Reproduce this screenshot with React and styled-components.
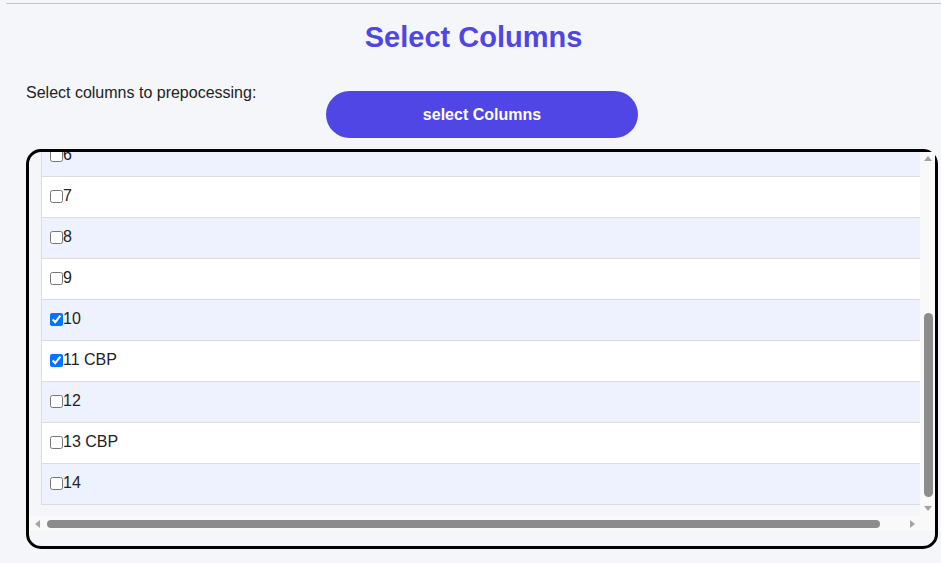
import React, { useState, useRef, useLayoutEffect } from 'react';
import styled, { createGlobalStyle } from 'styled-components';

const GlobalStyle = createGlobalStyle`
    html, body {
        margin: 0;
        padding: 0;
        background: #f5f6fa;
        font-family: "Liberation Sans", Arial, sans-serif;
        color: #222;
    }
`;

const Page = styled.div`
    padding-top: 3px;
    height: 563px;
    box-sizing: border-box;
    overflow: hidden;
`;

const Divider = styled.div`
    margin-left: 6px;
    border-top: 1px solid #c4c5cc;
`;

const Title = styled.h2`
    margin: 17px 0 0 6px;
    font-size: 29px;
    line-height: 32px;
    font-weight: bold;
    text-align: center;
    color: #4f46e5;
`;

const Content = styled.div`
    padding: 0 3px 0 26px;
`;

const ActionRow = styled.div`
    display: grid;
    grid-template-columns: 1fr 312px 1fr;
    align-items: start;
    margin-top: 31px;
`;

const Label = styled.span`
    font-size: 16px;
    line-height: 18px;
    color: #222;
`;

const SelectButton = styled.button`
    margin-top: 7px;
    height: 47px;
    border: none;
    border-radius: 24px;
    background: #4f46e5;
    color: #fff;
    font-family: "Liberation Sans", Arial, sans-serif;
    font-size: 16px;
    font-weight: bold;
    cursor: pointer;
`;

const Box = styled.div`
    margin-top: 11px;
    height: 400px;
    box-sizing: border-box;
    border: 3px solid #000;
    border-radius: 15px;
    padding-bottom: 15px;
`;

const ScrollFrame = styled.div`
    display: grid;
    grid-template-columns: 1fr 15px;
    grid-template-rows: 364px 15px;
`;

const Viewport = styled.div`
    overflow: hidden;
    box-sizing: border-box;
    padding: 12px 0 11px 12px;
`;

/* scrollbars are drawn by hand: the headless browser hides the native ones */
const VTrack = styled.div`
    background: #f9f9f9;
    display: flex;
    flex-direction: column;
    align-items: center;
`;

const HTrack = styled.div`
    background: #f9f9f9;
    display: flex;
    align-items: center;
`;

const Corner = styled.div`
    background: #f9f9f9;
`;

const ArrowCell = styled.div`
    width: 15px;
    height: 15px;
    flex: none;
    display: flex;
    align-items: center;
    justify-content: center;
`;

const Arrow = styled.span`
    width: 0;
    height: 0;
    border: 4px solid transparent;
    ${(p) => p.$dir === 'up' && 'border-bottom: 5px solid #a3a3a3; border-top-width: 0; margin-top: -3px;'}
    ${(p) => p.$dir === 'down' && 'border-top: 5px solid #a3a3a3; border-bottom-width: 0;'}
    ${(p) => p.$dir === 'left' && 'border-right: 5px solid #a3a3a3; border-left-width: 0; margin-left: 1px;'}
    ${(p) => p.$dir === 'right' && 'border-left: 5px solid #a3a3a3; border-right-width: 0;'}
`;

const VThumbArea = styled.div`
    flex: 1;
    width: 100%;
    position: relative;
`;

const HThumbArea = styled.div`
    flex: 1;
    height: 100%;
    position: relative;
`;

const Thumb = styled.div`
    position: absolute;
    background: #8c8c8c;
    border-radius: 5px;
`;

const Table = styled.table`
    min-width: 910px;
    border-collapse: collapse;
    border: 1px solid #dcdcdf;
`;

const Row = styled.tr`
    height: 41px;
    background: ${(p) => (p.$striped ? '#eef2ff' : '#ffffff')};
    border-bottom: 1px solid #dcdcdf;
`;

const Cell = styled.td`
    padding: 0 8px;
    font-size: 16px;
    color: #222;
`;

const Check = styled.label`
    display: inline-flex;
    align-items: center;
    cursor: pointer;

    input {
        margin: 0;
        width: 13px;
        height: 13px;
    }
`;

const columns = [
    '0', '1', '2', '3', '4', '5', '6', '7', '8', '9',
    '10', '11 CBP', '12', '13 CBP', '14',
];

function App() {
    const [checked, setChecked] = useState({ 10: true, 11: true });
    const scrollRef = useRef(null);

    useLayoutEffect(() => {
        const el = scrollRef.current;
        if (el) el.scrollTop = el.scrollHeight;
    }, []);

    const toggle = (i) => setChecked((c) => ({ ...c, [i]: !c[i] }));

    return (
        <>
            <GlobalStyle />
            <Page>
                <Divider />
                <Title>Select Columns</Title>
                <Content>
                    <ActionRow>
                        <Label>Select columns to prepocessing:</Label>
                        <SelectButton>select Columns</SelectButton>
                    </ActionRow>
                    <Box>
                        <ScrollFrame>
                            <Viewport ref={scrollRef}>
                                <Table>
                                    <tbody>
                                        <Row $striped={false}>
                                            <Cell>Columns</Cell>
                                        </Row>
                                        {columns.map((name, i) => (
                                            <Row key={name} $striped={i % 2 === 0}>
                                                <Cell>
                                                    <Check>
                                                        <input
                                                            type="checkbox"
                                                            checked={!!checked[i]}
                                                            onChange={() => toggle(i)}
                                                        />
                                                        {name}
                                                    </Check>
                                                </Cell>
                                            </Row>
                                        ))}
                                    </tbody>
                                </Table>
                            </Viewport>
                            <VTrack>
                                <ArrowCell><Arrow $dir="up" /></ArrowCell>
                                <VThumbArea>
                                    <Thumb style={{ top: 146, height: 184, left: 4, right: 2 }} />
                                </VThumbArea>
                                <ArrowCell><Arrow $dir="down" /></ArrowCell>
                            </VTrack>
                            <HTrack>
                                <ArrowCell><Arrow $dir="left" /></ArrowCell>
                                <HThumbArea>
                                    <Thumb style={{ left: 3, width: 833, top: 4, bottom: 3 }} />
                                </HThumbArea>
                                <ArrowCell><Arrow $dir="right" /></ArrowCell>
                            </HTrack>
                            <Corner />
                        </ScrollFrame>
                    </Box>
                </Content>
            </Page>
        </>
    );
}

export default App;
